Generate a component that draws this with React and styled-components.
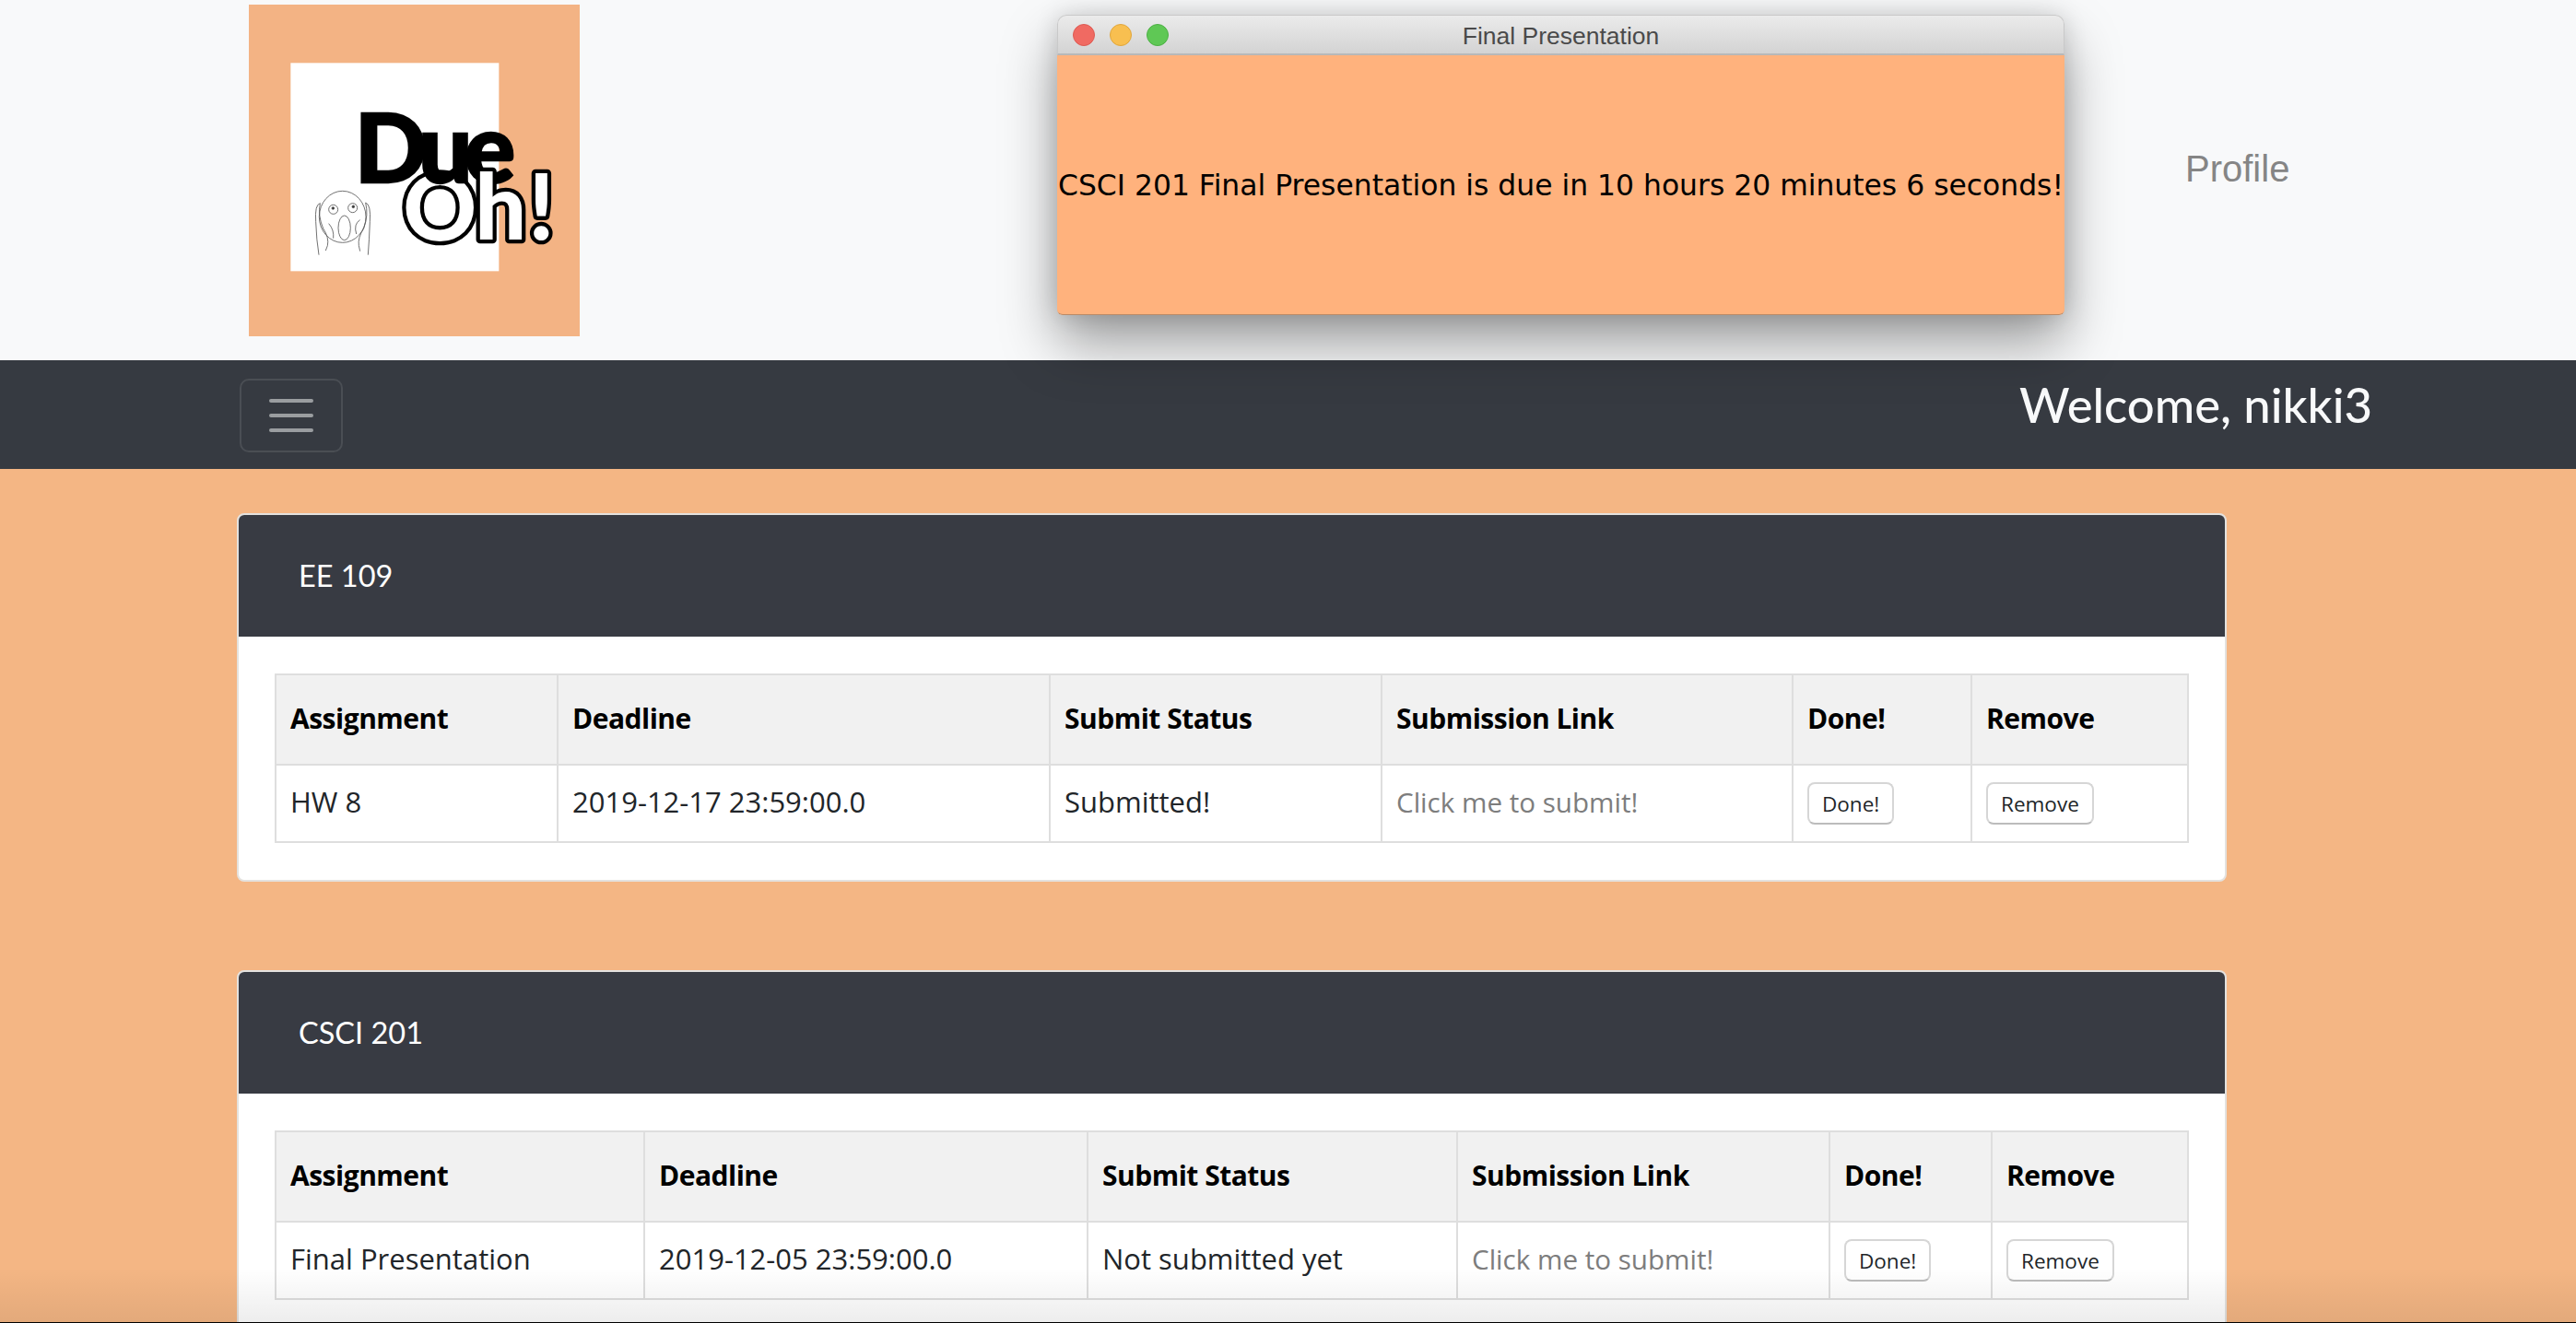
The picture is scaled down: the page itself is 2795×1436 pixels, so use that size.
import styled, { createGlobalStyle } from "styled-components";

const GlobalStyle = createGlobalStyle`
  html, body {
    margin: 0;
    height: 1436px;
    overflow: hidden;
    background: #f4b684;
  }
  * { box-sizing: border-box; }
`;

const Page = styled.div`
  position: relative;
  height: 1436px;
  overflow: hidden;
  font-family: "Open Sans", "Noto Sans", sans-serif;
`;

const TopHeader = styled.header`
  display: flex;
  align-items: flex-start;
  height: 391px;
  padding-left: 270px;
  background: #f8f9fa;
`;

const LogoSvg = styled.svg`
  display: block;
  width: 359px;
  height: 360px;
  margin-top: 5px;
  flex: none;
`;

const PopupWindow = styled.div`
  position: relative;
  z-index: 2;
  flex: none;
  width: 1093px;
  height: 326px;
  margin: 16px 0 0 518px;
  border-radius: 10px 10px 6px 6px;
  box-shadow: 0 30px 60px rgba(0, 0, 0, 0.38), 0 0 26px rgba(0, 0, 0, 0.14);
`;

const TitleBar = styled.div`
  display: flex;
  align-items: center;
  position: relative;
  height: 44px;
  padding-left: 16px;
  gap: 16px;
  background: linear-gradient(#ebebeb, #d3d3d3);
  border: 1px solid #c9c9c9;
  border-bottom: 2px solid #b8b8b8;
  border-radius: 10px 10px 0 0;
`;

const Light = styled.span`
  width: 24px;
  height: 24px;
  border-radius: 50%;
  background: ${(p) => p.$color};
  border: 1px solid ${(p) => p.$edge};
`;

const WindowTitle = styled.span`
  position: absolute;
  left: 0;
  right: 0;
  top: 6px;
  text-align: center;
  font-family: "Liberation Sans", sans-serif;
  font-size: 26.5px;
  line-height: 32px;
  color: #4a4a4a;
`;

const WindowBody = styled.div`
  display: flex;
  align-items: center;
  justify-content: center;
  height: 282px;
  background: #ffb27d;
  border-radius: 0 0 6px 6px;
  border-bottom: 1px solid #b98a68;
  color: #000;
  font-family: "DejaVu Sans", sans-serif;
  font-size: 31.4px;
  white-space: nowrap;
`;

const ProfileLink = styled.a`
  margin: 160px 0 0 131px;
  font-family: "Liberation Sans", sans-serif;
  font-size: 40px;
  line-height: 46px;
  color: #858585;
`;

const NavBar = styled.nav`
  display: flex;
  justify-content: space-between;
  align-items: flex-start;
  height: 118px;
  padding: 20px 221px 0 260px;
  background: #363a41;
`;

const Toggler = styled.button`
  display: flex;
  flex-direction: column;
  align-items: center;
  justify-content: center;
  gap: 12px;
  width: 112px;
  height: 80px;
  padding: 0;
  background: transparent;
  border: 2px solid rgba(255, 255, 255, 0.1);
  border-radius: 10px;
`;

const TogglerLine = styled.span`
  width: 48px;
  height: 4px;
  border-radius: 2px;
  background: #9a9da0;
`;

const Welcome = styled.div`
  margin-top: -4px;
  font-family: "Lato", sans-serif;
  font-size: 52.6px;
  font-weight: 500;
  line-height: 64px;
  color: #f8f9fa;
`;

const Main = styled.main`
  display: flex;
  flex-direction: column;
  gap: 96px;
  padding: 48px 0 0 257px;
`;

const Card = styled.section`
  width: 2159px;
  background: #fff;
  border: 2px solid #e4e2df;
  border-radius: 8px;
  overflow: hidden;
`;

const CardHeader = styled.h2`
  display: flex;
  align-items: center;
  height: 132px;
  margin: 0;
  padding: 0 0 2px 65px;
  background: #383b43;
  color: #fff;
  font-family: "Lato", sans-serif;
  font-size: 32.5px;
  font-weight: 400;
`;

const CardBody = styled.div`
  padding: 40px 38px 40px 39px;
`;

const Table = styled.table`
  width: 2075px;
  table-layout: fixed;
  border-collapse: collapse;
  font-size: 31px;
  color: #212529;
`;

const Col = styled.col`
  width: ${(p) => p.$w}px;
`;

const Th = styled.th`
  height: 98px;
  padding: 0 15px 3px;
  text-align: left;
  background: #f1f1f1;
  border: 2px solid #dedede;
  color: #000;
  font-size: 30px;
  font-weight: 700;
  letter-spacing: -0.5px;
`;

const Td = styled.td`
  height: 84px;
  padding: 0 15px 5px;
  border: 2px solid #dedede;
`;

const SubmitLink = styled.a`
  color: #7d7d7d;
  font-size: 29.6px;
`;

const ActionButton = styled.button`
  display: block;
  height: 46px;
  padding: 0 14px;
  margin-top: 5px;
  background: #fff;
  border: 2px solid #d6d6d6;
  border-bottom-color: #bcbcbc;
  border-radius: 8px;
  color: #212529;
  font-family: "Open Sans", sans-serif;
  font-size: 22.5px;
`;

const BottomFade = styled.div`
  position: absolute;
  left: 0;
  right: 0;
  bottom: 0;
  height: 60px;
  background: linear-gradient(rgba(0, 0, 0, 0), rgba(0, 0, 0, 0.07));
  border-bottom: 1px solid #000;
  pointer-events: none;
`;

const HEADERS = ["Assignment", "Deadline", "Submit Status", "Submission Link", "Done!", "Remove"];

const COURSES = [
  {
    name: "EE 109",
    widths: [306, 534, 360, 446, 194, 235],
    assignment: "HW 8",
    deadline: "2019-12-17 23:59:00.0",
    status: "Submitted!",
  },
  {
    name: "CSCI 201",
    widths: [400, 481, 401, 404, 176, 213],
    assignment: "Final Presentation",
    deadline: "2019-12-05 23:59:00.0",
    status: "Not submitted yet",
  },
];

const Logo = () => (
  <LogoSvg viewBox="90 15 1077 1080">
    <rect x="90" y="15" width="1077" height="1080" fill="#f3b384" />
    <rect x="226" y="205" width="678" height="678" fill="#fff" />
    <g fill="none" stroke="#555" strokeWidth="2.5">
      <ellipse cx="395" cy="706" rx="76" ry="84" />
      <circle cx="365" cy="682" r="15" />
      <circle cx="428" cy="677" r="15" />
      <circle cx="364" cy="678" r="4" fill="#333" />
      <circle cx="430" cy="673" r="4" fill="#333" />
      <ellipse cx="401" cy="742" rx="20" ry="40" />
      <path d="M350 728 q18 20 15 48 M452 716 q-22 14 -12 46" />
      <path d="M322 662 q-18 4 -14 60 q2 60 10 108 M322 662 q-8 40 10 82 q20 30 14 56 l-6 16" />
      <path d="M470 660 q18 6 14 62 q-2 60 -6 108 M470 660 q10 40 -6 84 q-20 30 -16 56 l4 18" />
    </g>
    <text x="592" y="783" fontFamily="Lato, sans-serif" fontWeight="900" fontSize="296" fill="#fff" stroke="#000" strokeWidth="26" strokeLinejoin="round" paintOrder="stroke">O</text>
    <text x="434" y="593" fontFamily="Lato, sans-serif" fontWeight="900" fontSize="310" fill="#000" stroke="#000" strokeWidth="7" letterSpacing="-26">Due</text>
    <text x="826" y="780" fontFamily="Lato, sans-serif" fontWeight="900" fontSize="296" fill="#fff" stroke="#000" strokeWidth="26" strokeLinejoin="round" paintOrder="stroke" letterSpacing="6">h!</text>
  </LogoSvg>
);

const CourseCard = ({ course }) => (
  <Card>
    <CardHeader>{course.name}</CardHeader>
    <CardBody>
      <Table>
        <colgroup>
          {course.widths.map((w, i) => (
            <Col key={i} $w={w} />
          ))}
        </colgroup>
        <thead>
          <tr>
            {HEADERS.map((h) => (
              <Th key={h}>{h}</Th>
            ))}
          </tr>
        </thead>
        <tbody>
          <tr>
            <Td>{course.assignment}</Td>
            <Td>{course.deadline}</Td>
            <Td>{course.status}</Td>
            <Td>
              <SubmitLink>Click me to submit!</SubmitLink>
            </Td>
            <Td>
              <ActionButton>Done!</ActionButton>
            </Td>
            <Td>
              <ActionButton>Remove</ActionButton>
            </Td>
          </tr>
        </tbody>
      </Table>
    </CardBody>
  </Card>
);

const App = () => (
  <Page>
    <GlobalStyle />
    <TopHeader>
      <Logo />
      <PopupWindow>
        <TitleBar>
          <Light $color="#f06a62" $edge="#dd5a52" />
          <Light $color="#f8bf50" $edge="#e0a63c" />
          <Light $color="#5fc855" $edge="#4cb044" />
          <WindowTitle>Final Presentation</WindowTitle>
        </TitleBar>
        <WindowBody>CSCI 201 Final Presentation is due in 10 hours 20 minutes 6 seconds!</WindowBody>
      </PopupWindow>
      <ProfileLink>Profile</ProfileLink>
    </TopHeader>
    <NavBar>
      <Toggler>
        <TogglerLine />
        <TogglerLine />
        <TogglerLine />
      </Toggler>
      <Welcome>Welcome, nikki3</Welcome>
    </NavBar>
    <Main>
      {COURSES.map((c) => (
        <CourseCard key={c.name} course={c} />
      ))}
    </Main>
    <BottomFade />
  </Page>
);

export default App;
